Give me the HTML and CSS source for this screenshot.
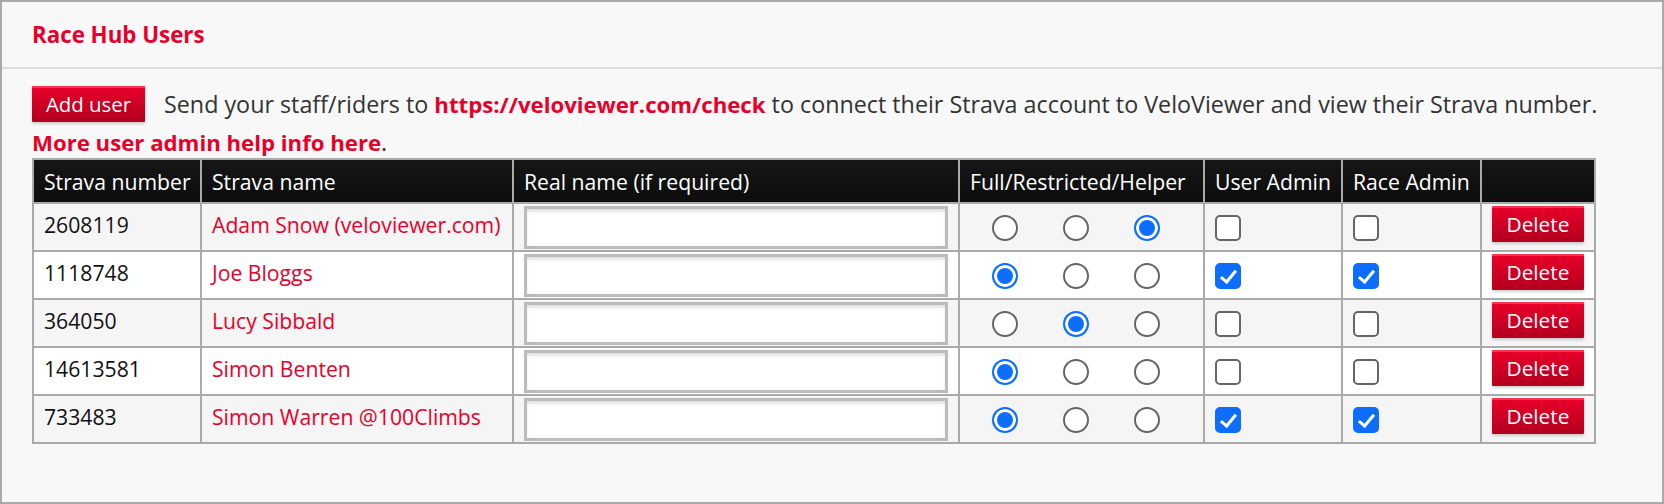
FILE: index.html
```html
<!DOCTYPE html>
<html lang="en">
<head>
<meta charset="utf-8">
<title>Race Hub Users</title>
<link rel="stylesheet" href="styles.css">
</head>
<body>
<div class="panel">
  <div class="panel-head">
    <h2 class="panel-title">Race Hub Users</h2>
  </div>
  <div class="panel-body">
    <div class="intro">
      <button class="btn" type="button">Add user</button>
      <span class="intro-text">Send your staff/riders to <a class="link" href="#">https://veloviewer.com/check</a> to connect their Strava account to VeloViewer and view their Strava number.</span>
    </div>
    <div class="help"><a class="link" href="#">More user admin help info here</a>.</div>
    <table class="users">
      <thead>
        <tr>
          <th class="c-num">Strava number</th>
          <th class="c-name">Strava name</th>
          <th class="c-real">Real name (if required)</th>
          <th class="c-role">Full/Restricted/Helper</th>
          <th class="c-ua">User Admin</th>
          <th class="c-ra">Race Admin</th>
          <th class="c-del"></th>
        </tr>
      </thead>
      <tbody>
        <tr>
          <td class="t">2608119</td>
          <td class="t"><a class="name" href="#">Adam Snow (veloviewer.com)</a></td>
          <td class="top"><input class="txt" type="text"></td>
          <td><div class="radios"><input type="radio" name="r1"><input type="radio" name="r1"><input type="radio" name="r1" checked></div></td>
          <td><input class="chk" type="checkbox"></td>
          <td><input class="chk" type="checkbox"></td>
          <td class="top"><button class="btn btn-del" type="button">Delete</button></td>
        </tr>
        <tr>
          <td class="t">1118748</td>
          <td class="t"><a class="name" href="#">Joe Bloggs</a></td>
          <td class="top"><input class="txt" type="text"></td>
          <td><div class="radios"><input type="radio" name="r2" checked><input type="radio" name="r2"><input type="radio" name="r2"></div></td>
          <td><input class="chk" type="checkbox" checked></td>
          <td><input class="chk" type="checkbox" checked></td>
          <td class="top"><button class="btn btn-del" type="button">Delete</button></td>
        </tr>
        <tr>
          <td class="t">364050</td>
          <td class="t"><a class="name" href="#">Lucy Sibbald</a></td>
          <td class="top"><input class="txt" type="text"></td>
          <td><div class="radios"><input type="radio" name="r3"><input type="radio" name="r3" checked><input type="radio" name="r3"></div></td>
          <td><input class="chk" type="checkbox"></td>
          <td><input class="chk" type="checkbox"></td>
          <td class="top"><button class="btn btn-del" type="button">Delete</button></td>
        </tr>
        <tr>
          <td class="t">14613581</td>
          <td class="t"><a class="name" href="#">Simon Benten</a></td>
          <td class="top"><input class="txt" type="text"></td>
          <td><div class="radios"><input type="radio" name="r4" checked><input type="radio" name="r4"><input type="radio" name="r4"></div></td>
          <td><input class="chk" type="checkbox"></td>
          <td><input class="chk" type="checkbox"></td>
          <td class="top"><button class="btn btn-del" type="button">Delete</button></td>
        </tr>
        <tr>
          <td class="t">733483</td>
          <td class="t"><a class="name" href="#">Simon Warren @100Climbs</a></td>
          <td class="top"><input class="txt" type="text"></td>
          <td><div class="radios"><input type="radio" name="r5" checked><input type="radio" name="r5"><input type="radio" name="r5"></div></td>
          <td><input class="chk" type="checkbox" checked></td>
          <td><input class="chk" type="checkbox" checked></td>
          <td class="top"><button class="btn btn-del" type="button">Delete</button></td>
        </tr>
      </tbody>
    </table>
  </div>
</div>
</body>
</html>
```
FILE: styles.css
```css
* { box-sizing: border-box; }

html, body {
  margin: 0;
  padding: 0;
}

body {
  font-family: "Open Sans", "Noto Sans", sans-serif;
  font-size: 20px;
  color: #333;
  background: #f8f8f8;
}

.panel {
  height: 504px;
  border: 2px solid #aaa;
  background: #f8f8f8;
}

.panel-head {
  height: 67px;
  display: flex;
  align-items: center;
  padding: 0 30px;
  border-bottom: 2px solid #ddd;
}

.panel-title {
  margin: 0;
  font-size: 22.3px;
  font-weight: 700;
  color: #e8002a;
}

.panel-body {
  padding: 17px 30px 0 30px;
}

.intro {
  display: flex;
  align-items: center;
  gap: 19px;
  height: 36px;
  white-space: nowrap;
}

.intro-text {
  font-size: 23.3px;
  line-height: 28px;
}

.link {
  color: #e8002a;
  font-weight: 700;
  font-size: 22.2px;
  text-decoration: none;
}

.help {
  margin-top: 6px;
  line-height: 28px;
  font-size: 23.3px;
}

.btn {
  font-family: inherit;
  font-size: 20.4px;
  color: #fff;
  border: 0;
  border-radius: 1px;
  background: linear-gradient(#ea002b, #b3001e);
  box-shadow: inset 0 2px 0 #ff3452, 0 2px 3px rgba(0, 0, 0, 0.18);
  height: 36px;
  width: 113px;
  padding: 0;
  line-height: 36px;
  cursor: pointer;
}

.btn-del {
  width: 92px;
  font-size: 20.8px;
}

.users {
  margin-top: 1px;
  border-collapse: separate;
  border-spacing: 0;
  table-layout: fixed;
  width: 1564px;
  border-top: 2px solid #aaa;
  border-left: 2px solid #aaa;
  color: #111;
  font-size: 21.2px;
}

.users th,
.users td {
  border-right: 2px solid #aaa;
  border-bottom: 2px solid #aaa;
  padding: 0 10px;
  text-align: left;
  font-weight: 400;
  white-space: nowrap;
}

.users th {
  height: 44px;
  background: linear-gradient(#161616, #0d0d0d);
  color: #fff;
}

.users td {
  height: 48px;
  padding: 2px 10px 1px 10px;
  vertical-align: middle;
}

.users td.t {
  padding-top: 0;
  padding-bottom: 5px;
}

.users td.top {
  vertical-align: top;
}

.users tbody tr:nth-child(odd) td {
  background: #f5f5f5;
}

.users tbody tr:nth-child(even) td {
  background: #fff;
}

.c-num { width: 168px; }
.c-name { width: 312px; }
.c-real { width: 446px; }
.c-role { width: 245px; }
.c-ua { width: 138px; }
.c-ra { width: 139px; }
.c-del { width: 114px; }

.name {
  color: #e8002a;
  text-decoration: none;
}

.txt {
  display: block;
  width: 100%;
  height: 43px;
  margin: 0;
  border: 3px solid #bbb;
  background: #fff;
  box-shadow: inset 0 3px 3px #e6e6e6;
  font-family: inherit;
  font-size: 20px;
}

.radios {
  display: flex;
  gap: 45px;
  padding-left: 22px;
}

.radios input {
  appearance: none;
  -webkit-appearance: none;
  margin: 0;
  width: 26px;
  height: 26px;
  border: 2px solid #666;
  border-radius: 50%;
  background: #fff;
}

.radios input:checked {
  border-color: #0d6efd;
  background: #0d6efd;
  box-shadow: inset 0 0 0 3px #fff;
}

.chk {
  appearance: none;
  -webkit-appearance: none;
  display: block;
  position: relative;
  margin: 0;
  width: 26px;
  height: 26px;
  border: 2px solid #666;
  border-radius: 5px;
  background: #fff;
}

.chk:checked {
  border-color: #0d6efd;
  background: #0d6efd;
}

.chk:checked::after {
  content: "";
  position: absolute;
  left: 7px;
  top: 2px;
  width: 6px;
  height: 13px;
  border-right: 3.5px solid #fff;
  border-bottom: 3.5px solid #fff;
  transform: rotate(40deg);
}
```
